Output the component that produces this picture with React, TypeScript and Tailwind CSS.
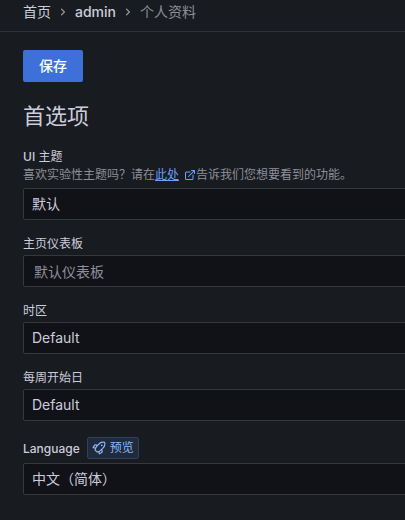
import { Fragment } from "react";
import type { ReactNode } from "react";

const CRUMBS = [
  { href: "#home", label: "首页", style: "font-normal" },
  { href: "#admin", label: "admin", style: "font-medium" },
  { href: "#profile", label: "个人资料", style: "text-[#8d8e9a]" },
];

const control =
  "block w-full h-8 appearance-none rounded-xs border border-[#36383e] bg-[#111217] text-sm text-[#ccccdc] outline-none focus:border-[#6e9fff]";

function Chevron() {
  return (
    <svg className="size-4 text-[#8d8e9a]" viewBox="0 0 24 24" fill="currentColor" aria-hidden="true">
      <path d="M14.83,11.29,10.59,7.05a1,1,0,0,0-1.42,0,1,1,0,0,0,0,1.41L12.71,12,9.17,15.54a1,1,0,0,0,0,1.41,1,1,0,0,0,.71.29,1,1,0,0,0,.71-.29l4.24-4.24A1,1,0,0,0,14.83,11.29Z" />
    </svg>
  );
}

function ExternalIcon() {
  return (
    <svg className="ml-[5px] size-3 text-[#6e9fff]" viewBox="0 0 24 24" fill="currentColor" aria-hidden="true">
      <path d="M18,10.82a1,1,0,0,0-1,1V19a1,1,0,0,1-1,1H5a1,1,0,0,1-1-1V8A1,1,0,0,1,5,7h7.18a1,1,0,0,0,0-2H5A3,3,0,0,0,2,8V19a3,3,0,0,0,3,3H16a3,3,0,0,0,3-3V11.82A1,1,0,0,0,18,10.82Zm3.92-8.2a1,1,0,0,0-.54-.54A1,1,0,0,0,21,2H15a1,1,0,0,0,0,2h3.59L8.29,14.29a1,1,0,0,0,0,1.42,1,1,0,0,0,1.42,0L20,5.41V9a1,1,0,0,0,2,0V3A1,1,0,0,0,21.92,2.62Z" />
    </svg>
  );
}

function RocketIcon() {
  return (
    <svg className="size-[14px]" viewBox="0 0 24 24" fill="currentColor" aria-hidden="true">
      <path d="M22.601 2.062a1 1 0 0 0-.713-.713A11.252 11.252 0 0 0 10.47 4.972L9.354 6.296 6.75 5.668a2.777 2.777 0 0 0-3.387 1.357l-2.2 3.9a1 1 0 0 0 .661 1.469l3.073.659a13.42 13.42 0 0 0-.555 2.434 1 1 0 0 0 .284.836l3.1 3.1a1 1 0 0 0 .708.293c.028 0 .057-.001.085-.004a12.169 12.169 0 0 0 2.492-.49l.644 3.004a1 1 0 0 0 1.469.661l3.905-2.202a3.035 3.035 0 0 0 1.375-3.304l-.668-2.76 1.237-1.137A11.204 11.204 0 0 0 22.6 2.062ZM3.572 10.723l1.556-2.76a.826.826 0 0 1 1.07-.375l1.718.416-.65.772a13.095 13.095 0 0 0-1.59 2.398Zm12.47 8.222-2.715 1.532-.43-2.005a11.34 11.34 0 0 0 2.414-1.62l.743-.683.404 1.664a1.041 1.041 0 0 1-.416 1.112Zm1.615-6.965-3.685 3.386a9.773 9.773 0 0 1-5.17 2.304l-2.405-2.404a10.932 10.932 0 0 1 2.401-5.206l1.679-1.993a.964.964 0 0 0 .078-.092L11.99 6.27a9.278 9.278 0 0 1 8.81-3.12 9.218 9.218 0 0 1-3.143 8.829Zm-.923-6.164a1.5 1.5 0 1 0 1.5 1.5 1.5 1.5 0 0 0-1.5-1.5Z" />
    </svg>
  );
}

type FieldProps = {
  id: string;
  label: ReactNode;
  badge?: ReactNode;
  description?: ReactNode;
  children: ReactNode;
};

function Field({ id, label, badge, description, children }: FieldProps) {
  return (
    <div>
      <div className="flex items-center gap-[7px]">
        <label htmlFor={id} className="text-xs leading-[15px]">
          {label}
        </label>
        {badge}
      </div>
      {description}
      <div className="mt-1">{children}</div>
    </div>
  );
}

function Select({ id, value }: { id: string; value: string }) {
  return (
    <select id={id} className={`${control} px-2`} defaultValue={value}>
      <option value={value}>{value}</option>
    </select>
  );
}

export default function App() {
  return (
    <div className="min-h-screen overflow-hidden bg-[#181b1f] font-[Inter,'Noto_Sans_CJK_SC',sans-serif] text-[#ccccdc]">
      <header className="border-b border-[#2d3036] pt-[2px] pb-[9px] pl-[23px]">
        <nav className="flex h-5 items-center gap-1 text-sm">
          {CRUMBS.map(({ href, label, style }, i) => (
            <Fragment key={href}>
              {i > 0 && <Chevron />}
              <a href={href} className={style}>
                {label}
              </a>
            </Fragment>
          ))}
        </nav>
      </header>

      {/* fields run on past the right edge of the window */}
      <main className="-mr-1 pt-[18px] pb-6 pl-[23px]">
        <form onSubmit={(e) => e.preventDefault()}>
          <button
            type="submit"
            className="block h-8 rounded-xs bg-[#3d71d9] px-4 text-sm font-medium text-white"
          >
            保存
          </button>

          <h3 className="mt-5 mb-[19px] text-[22px] leading-7">首选项</h3>

          <div className="flex flex-col gap-4">
            <Field
              id="theme"
              label={
                <>
                  <span className="font-medium">UI</span> 主题
                </>
              }
              description={
                <p className="flex items-center pt-[2px] text-xs leading-[18px] text-[#8d8e9a]">
                  喜欢实验性主题吗？请在
                  <a href="#feedback" className="flex items-center text-[#6e9fff]">
                    <span className="underline">此处</span>
                    <ExternalIcon />
                  </a>
                  告诉我们您想要看到的功能。
                </p>
              }
            >
              <Select id="theme" value="默认" />
            </Field>

            <Field id="dashboard" label="主页仪表板">
              <input
                id="dashboard"
                type="text"
                placeholder="默认仪表板"
                className={`${control} px-[10px] placeholder:text-[#8d8e9a]`}
              />
            </Field>

            <Field id="timezone" label="时区">
              <Select id="timezone" value="Default" />
            </Field>

            <Field id="week-start" label="每周开始日">
              <Select id="week-start" value="Default" />
            </Field>

            <Field
              id="language"
              label={<span className="font-medium">Language</span>}
              badge={
                <span className="flex h-[22px] items-center gap-1 rounded-xs border border-[#2a4067] bg-[#202a3a] px-1 text-xs text-[#8ab8ff]">
                  <RocketIcon />
                  预览
                </span>
              }
            >
              <Select id="language" value="中文（简体）" />
            </Field>
          </div>
        </form>
      </main>
    </div>
  );
}
